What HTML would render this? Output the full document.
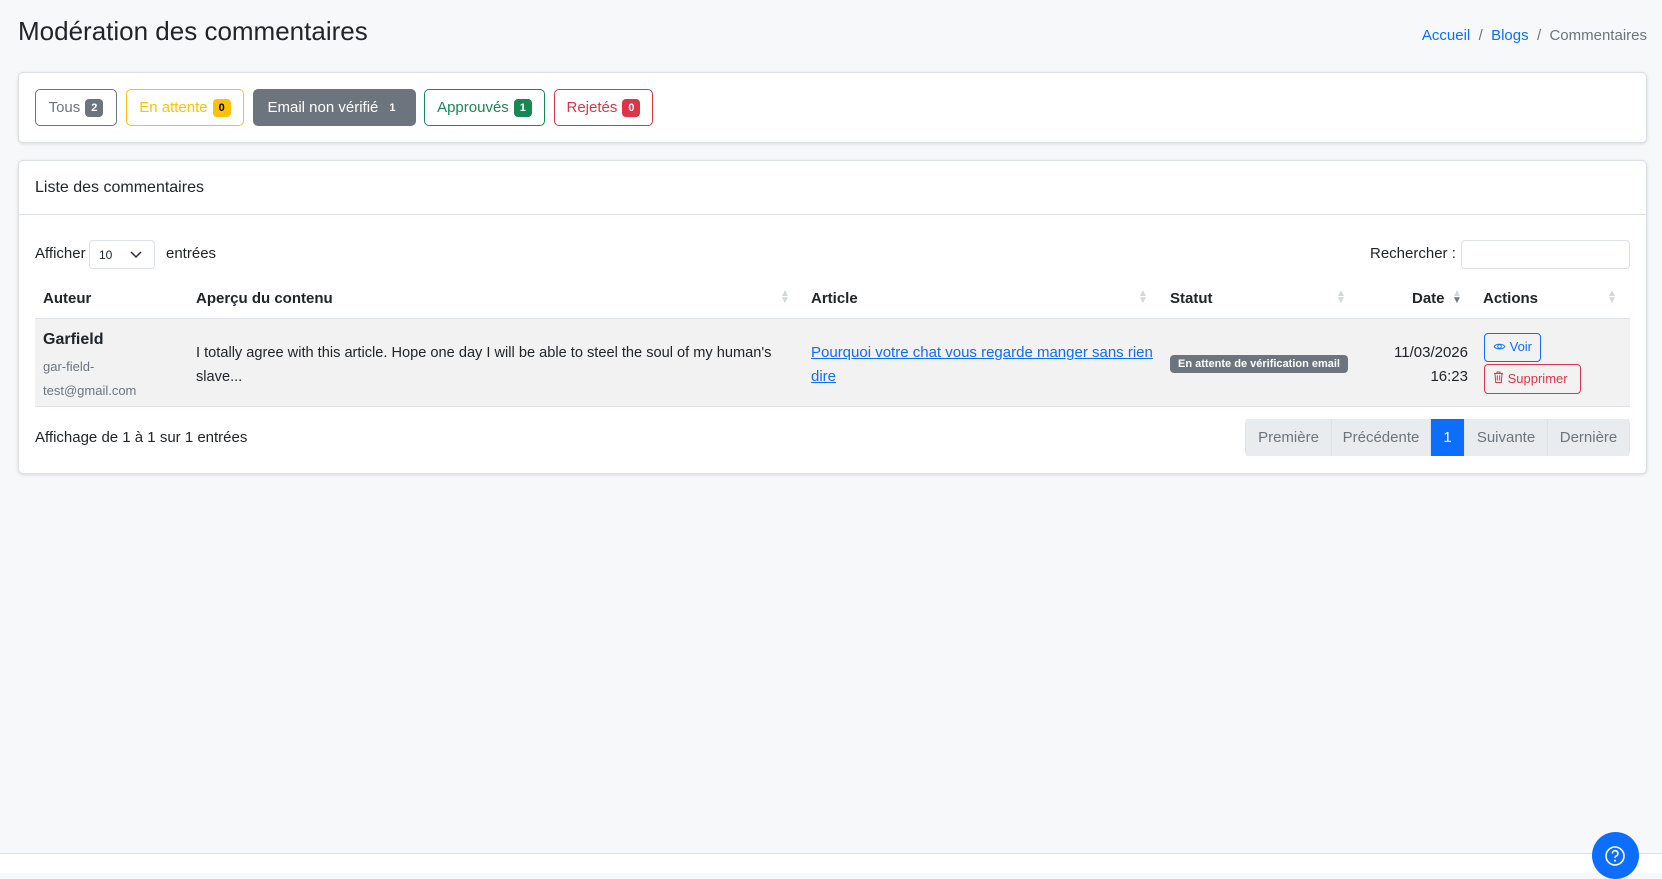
<!DOCTYPE html>
<html><head><meta charset="utf-8"><style>
*{box-sizing:border-box;margin:0;padding:0}
body{width:1662px;height:873px;background:#f7f8fa;font-family:"Liberation Sans",sans-serif;color:#212529;position:relative;overflow:hidden;font-size:15px}
.a{position:absolute}
h1{position:absolute;left:18px;top:16px;font-weight:400;font-size:26px;color:#212529}
.bc{right:15px;top:27px;font-size:15px;color:#6c757d}
.bc a{color:#0d6efd;text-decoration:none}
.card{position:absolute;left:18px;width:1629px;background:#fff;border:1px solid #dcdfe3;border-radius:5px;box-shadow:0 1px 3px rgba(0,0,0,.12)}
.btn{position:absolute;top:89px;height:37px;border:1px solid;border-radius:5px;display:flex;align-items:center;justify-content:center;font-size:15px;gap:5px}
.bd{font-size:11px;font-weight:700;color:#fff;border-radius:4px;padding:2px 6px;line-height:14px}
.sort{position:absolute;color:#d4d7db;font-size:10px;line-height:7px}
.pg{position:absolute;top:419px;height:37px;display:flex;align-items:center;justify-content:center;color:#6c757d;background:#e9ecef;border-right:1px solid #dee2e6;font-size:15px}
</style></head><body>
<h1>Modération des commentaires</h1>
<div class="a bc"><a>Accueil</a> &nbsp;/&nbsp; <a>Blogs</a> &nbsp;/&nbsp; Commentaires</div>

<div class="card" style="top:72px;height:71px"></div>
<div class="btn" style="left:35px;width:82px;border-color:#6c757d;color:#6c757d">Tous <span class="bd" style="background:#6c757d">2</span></div>
<div class="btn" style="left:126px;width:118px;border-color:#ffc107;color:#ffc107">En attente <span class="bd" style="background:#ffc107;color:#000">0</span></div>
<div class="btn" style="left:253px;width:163px;border-color:#6c757d;background:#6c757d;color:#fff">Email non vérifié <span class="bd" style="background:#6c757d">1</span></div>
<div class="btn" style="left:424px;width:121px;border-color:#198754;color:#198754">Approuvés <span class="bd" style="background:#198754">1</span></div>
<div class="btn" style="left:554px;width:99px;border-color:#dc3545;color:#dc3545">Rejetés <span class="bd" style="background:#dc3545">0</span></div>

<div class="card" style="top:160px;height:314px"></div>
<div class="a" style="left:35px;top:179px;font-size:16px">Liste des commentaires</div>
<div class="a" style="left:19px;top:214px;width:1627px;height:1px;background:#dee2e6"></div>

<div class="a" style="left:35px;top:245px">Afficher</div>
<div class="a" style="left:89px;top:240px;width:66px;height:29px;border:1px solid #dee2e6;border-radius:4px;font-size:12px;padding:7px 0 0 9px">10<svg style="position:absolute;left:40px;top:10px" width="12" height="8" viewBox="0 0 12 8"><path d="M1 1l5 5 5-5" fill="none" stroke="#333" stroke-width="1.5"/></svg></div>
<div class="a" style="left:166px;top:245px">entrées</div>
<div class="a" style="left:1370px;top:245px">Rechercher :</div>
<div class="a" style="left:1461px;top:240px;width:169px;height:29px;border:1px solid #dee2e6;border-radius:4px"></div>

<div class="a" style="left:35px;top:318px;width:1595px;height:89px;background:#f2f2f2;border-top:1px solid #dee2e6;border-bottom:1px solid #dee2e6"></div>
<div class="a" style="left:43px;top:290px;font-weight:700">Auteur</div>
<div class="a" style="left:196px;top:290px;font-weight:700">Aperçu du contenu</div>
<div class="a" style="left:811px;top:290px;font-weight:700">Article</div>
<div class="a" style="left:1170px;top:290px;font-weight:700">Statut</div>
<div class="a" style="left:1412px;top:290px;font-weight:700">Date</div>
<div class="a" style="left:1483px;top:290px;font-weight:700">Actions</div>
<div class="sort" style="left:780px;top:290px">▲<br>▼</div>
<div class="sort" style="left:1138px;top:290px">▲<br>▼</div>
<div class="sort" style="left:1336px;top:290px">▲<br>▼</div>
<div class="sort" style="left:1452px;top:290px">▲<br><span style="color:#6c757d">▼</span></div>
<div class="sort" style="left:1607px;top:290px">▲<br>▼</div>

<div class="a" style="left:43px;top:331px;font-weight:700;font-size:16px">Garfield</div>
<div class="a" style="left:43px;top:355px;font-size:13px;color:#6c757d;line-height:24px">gar-field-<br>test@gmail.com</div>
<div class="a" style="left:196px;top:341px;width:600px;line-height:24px;font-size:14.6px">I totally agree with this article. Hope one day I will be able to steel the soul of my human's slave...</div>
<div class="a" style="left:811px;top:341px;width:350px;line-height:24px;color:#0d6efd;text-decoration:underline">Pourquoi votre chat vous regarde manger sans rien dire</div>
<div class="a" style="left:1170px;top:355px;background:#6c757d;color:#fff;font-size:11px;font-weight:700;border-radius:4px;padding:3px 8px">En attente de vérification email</div>
<div class="a" style="left:1350px;top:341px;width:118px;text-align:right;line-height:24px">11/03/2026<br>16:23</div>
<div class="a" style="left:1484px;top:333px;width:57px;height:29px;border:1px solid #0d6efd;border-radius:4px;color:#0d6efd;font-size:13px;padding:5px 0 0 8px"><svg width="13" height="9" viewBox="0 0 14 10"><path d="M1 5C3 1.5 11 1.5 13 5 11 8.5 3 8.5 1 5z" fill="none" stroke="#0d6efd"/><circle cx="7" cy="5" r="2" fill="none" stroke="#0d6efd"/></svg> Voir</div>
<div class="a" style="left:1484px;top:364px;width:97px;height:30px;border:1px solid #dc3545;border-radius:4px;color:#dc3545;font-size:13px;padding:6px 0 0 8px"><svg width="11" height="12" viewBox="0 0 11 12"><path d="M1 2.5h9M4 2.5V1h3v1.5M2 2.5l.7 9h5.6l.7-9M4.3 4.5v5M6.7 4.5v5" fill="none" stroke="#dc3545"/></svg> Supprimer</div>

<div class="a" style="left:35px;top:429px">Affichage de 1 à 1 sur 1 entrées</div>
<div class="a" style="left:1245px;top:419px;width:385px;height:37px;border-radius:5px;overflow:hidden;border:1px solid #dee2e6;background:#e9ecef"></div>
<div class="pg" style="left:1246px;width:86px">Première</div>
<div class="pg" style="left:1332px;width:99px">Précédente</div>
<div class="pg" style="left:1431px;width:34px;background:#0d6efd;color:#fff">1</div>
<div class="pg" style="left:1465px;width:83px">Suivante</div>
<div class="pg" style="left:1548px;width:81px;border-right:none">Dernière</div>

<div class="a" style="left:0;top:853px;width:1662px;height:20px;background:#fff;border-top:1px solid #dee2e6"></div>
<div class="a" style="left:1592px;top:832px;width:47px;height:47px;border-radius:50%;background:#0d6efd"></div>
<svg class="a" style="left:1604px;top:845px" width="22" height="22" viewBox="0 0 22 22"><circle cx="11" cy="11" r="9" fill="none" stroke="#fff" stroke-width="1.6"/><path d="M8.3 8.5a2.8 2.8 0 1 1 3.8 2.6c-.8.4-1.1.9-1.1 1.8" fill="none" stroke="#fff" stroke-width="1.6"/><circle cx="11" cy="15.6" r="1" fill="#fff"/></svg>
</body></html>
